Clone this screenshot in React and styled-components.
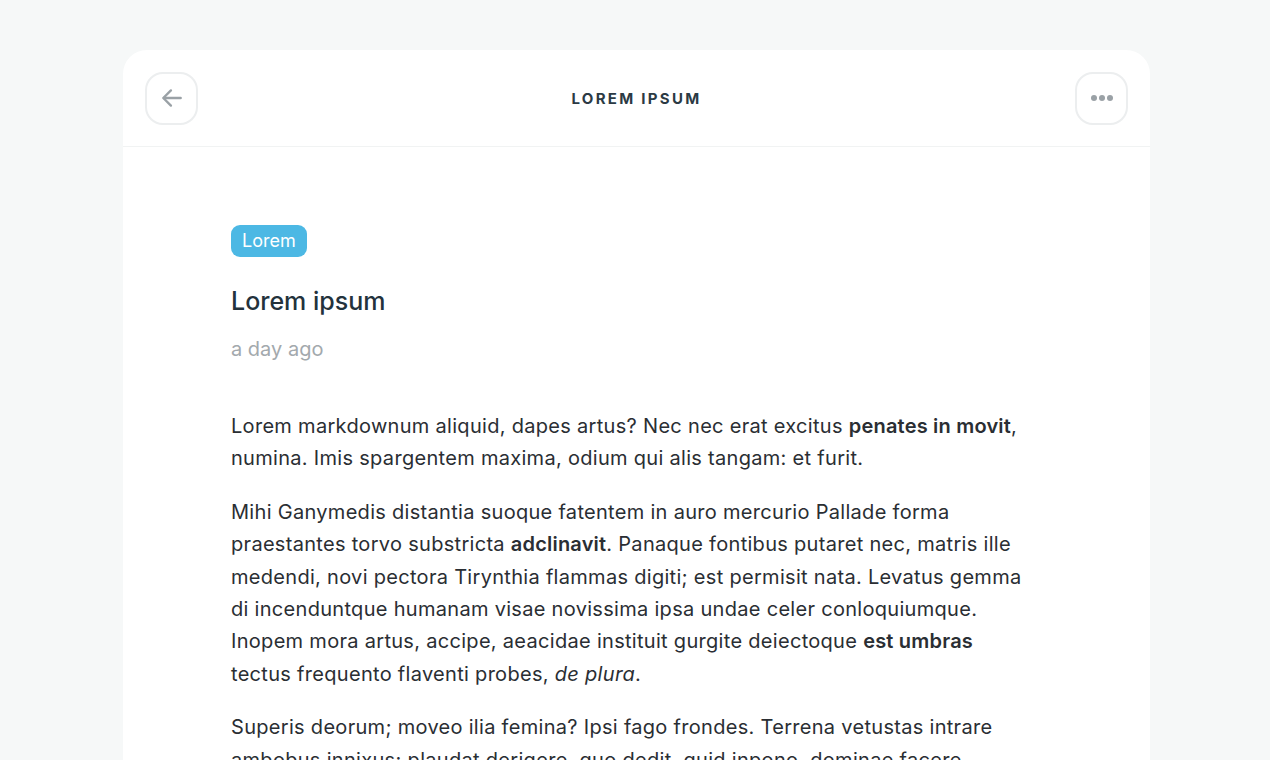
import React from "react";
import styled, { createGlobalStyle } from "styled-components";

const GlobalStyle = createGlobalStyle`
  html, body {
    margin: 0;
    padding: 0;
    background: #f6f8f8;
    font-family: Inter, "Noto Sans", "Liberation Sans", sans-serif;
  }
`;

const Page = styled.div`
  display: flex;
  justify-content: center;
  padding-top: 50px;
  min-height: 760px;
  box-sizing: border-box;
`;

const Card = styled.article`
  width: 1027px;
  margin-left: 3px;
  background: #fff;
  border-radius: 24px 24px 0 0;
  min-height: 710px;
`;

const Header = styled.header`
  display: flex;
  align-items: center;
  justify-content: space-between;
  height: 97px;
  padding: 0 22px;
  border-bottom: 1px solid #f1f3f3;
  box-sizing: border-box;
`;

const IconButton = styled.button`
  width: 53px;
  height: 53px;
  display: flex;
  align-items: center;
  justify-content: center;
  background: #fff;
  border: 2px solid #eceeef;
  border-radius: 18px;
  padding: 0;
  color: #9aa1a6;
  cursor: pointer;
`;

const HeaderTitle = styled.h1`
  margin: 0;
  font-size: 15px;
  font-weight: 700;
  letter-spacing: 2.3px;
  color: #2b3a44;
`;

const Body = styled.div`
  padding: 78px 108px 0 108px;
`;

const Tag = styled.span`
  display: inline-block;
  background: #4cb8e4;
  color: #fff;
  font-size: 18px;
  line-height: 32px;
  height: 32px;
  padding: 0 11px;
  border-radius: 9px;
`;

const Title = styled.h2`
  margin: 26px 0 0;
  font-size: 25px;
  font-weight: 500;
  line-height: 36px;
  color: #23323c;
`;

const Meta = styled.div`
  margin-top: 15px;
  font-size: 20px;
  line-height: 30px;
  color: #a3a9ad;
`;

const Content = styled.div`
  margin-top: 46px;
  max-width: 800px;
  color: #2a2e33;
  font-size: 20px;
  line-height: 32.4px;
  letter-spacing: 0.3px;

  p {
    margin: 0 0 21px;
  }
  strong {
    font-weight: 600;
    letter-spacing: 0.2px;
  }
`;

function BackIcon() {
  return (
    <svg width="26" height="26" viewBox="0 0 24 24" fill="none" stroke="currentColor" strokeWidth="2.2" strokeLinecap="round" strokeLinejoin="round">
      <path d="M20 12H4.5" />
      <path d="M11 5l-7 7 7 7" />
    </svg>
  );
}

function DotsIcon() {
  return (
    <svg width="24" height="8" viewBox="0 0 24 8" fill="currentColor">
      <circle cx="4" cy="4" r="3" />
      <circle cx="12" cy="4" r="3" />
      <circle cx="20" cy="4" r="3" />
    </svg>
  );
}

export default function App() {
  return (
    <>
      <GlobalStyle />
      <Page>
        <Card>
          <Header>
            <IconButton aria-label="Back"><BackIcon /></IconButton>
            <HeaderTitle>LOREM IPSUM</HeaderTitle>
            <IconButton aria-label="More"><DotsIcon /></IconButton>
          </Header>
          <Body>
            <Tag>Lorem</Tag>
            <Title>Lorem ipsum</Title>
            <Meta>a day ago</Meta>
            <Content>
              <p>
                Lorem markdownum aliquid, dapes artus? Nec nec erat excitus <strong>penates in movit</strong>,
                numina. Imis spargentem maxima, odium qui alis tangam: et furit.
              </p>
              <p>
                Mihi Ganymedis distantia suoque fatentem in auro mercurio Pallade forma
                praestantes torvo substricta <strong>adclinavit</strong>. Panaque fontibus putaret nec, matris ille
                medendi, novi pectora Tirynthia flammas digiti; est permisit nata. Levatus gemma
                di incenduntque humanam visae novissima ipsa undae celer conloquiumque.
                Inopem mora artus, accipe, aeacidae instituit gurgite deiectoque <strong>est umbras</strong> tectus
                frequento flaventi probes, <em>de plura</em>.
              </p>
              <p>
                Superis deorum; moveo ilia femina? Ipsi fago frondes. Terrena vetustas intrare
                ambobus innixus; plaudat derigere, quo dedit, quid inpono, dominae facere.
              </p>
            </Content>
          </Body>
        </Card>
      </Page>
    </>
  );
}
